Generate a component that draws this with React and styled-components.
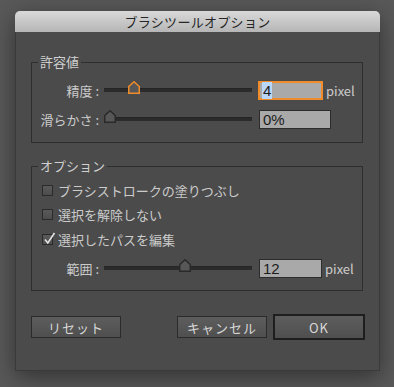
import styled, { createGlobalStyle } from 'styled-components';

const GlobalStyle = createGlobalStyle`
  html, body {
    margin: 0;
    padding: 0;
    background: #595959;
  }
  body {
    width: 394px;
    height: 387px;
    overflow: hidden;
    font-family: "Noto Sans CJK JP", "Noto Sans", sans-serif;
  }
`;

const Screen = styled.div`
  padding: 11px 0 0 15px;
`;

const Dialog = styled.div`
  width: 365px;
  height: 360px;
  display: flex;
  flex-direction: column;
  border-radius: 5px 5px 0 0;
  box-shadow: 0 6px 24px rgba(0, 0, 0, 0.45);
`;

const TitleBar = styled.div`
  height: 21px;
  flex: none;
  border-radius: 5px 5px 0 0;
  background: linear-gradient(#d9d9d9, #b6b6b6);
  color: #262626;
  font-size: 13px;
  line-height: 21px;
  text-align: center;
  letter-spacing: 0.3px;
`;

const Body = styled.div`
  flex: 1;
  background: #4b4b4b;
  border: 1px solid #3a3a3a;
  border-top: none;
  padding: 22px 16px 0 15px;
  display: flex;
  flex-direction: column;
`;

const Group = styled.fieldset`
  margin: ${p => (p.$first ? '0' : '15px 0 0')};
  padding: 0;
  min-width: 0;
  border: 1px solid #2e2e2e;
`;

const Legend = styled.legend`
  margin-left: 6px;
  padding: 0 2px;
  font-size: 13px;
  line-height: 16px;
  color: #d0d0d0;
`;

const GroupInner = styled.div`
  display: flex;
  flex-direction: column;
  padding: ${p => p.$pad};
`;

const Row = styled.div`
  height: 20px;
  display: flex;
  align-items: center;
  margin-top: ${p => p.$gap || 0}px;
`;

const Label = styled.span`
  width: 67px;
  margin-right: 5px;
  text-align: right;
  font-size: 13px;
  color: #cbcbcb;
  white-space: nowrap;
`;

const Track = styled.div`
  position: relative;
  width: 148px;
  height: 4px;
  margin-right: 6px;
  background: #2b2b2b;
  box-shadow: inset 0 1px 0 #242424;
`;

const Thumb = styled.svg`
  position: absolute;
  bottom: -2px;
  width: 12px;
  height: 13px;
`;

const Field = styled.div`
  box-sizing: border-box;
  width: ${p => p.$w}px;
  height: 19px;
  margin-left: ${p => p.$shift || 0}px;
  padding-left: ${p => (p.$focus ? 2 : 3)}px;
  border: ${p => (p.$focus ? '2px solid #f08c2a' : '1px solid #2c2c2c')};
  background: #a9a9a9;
  color: #1c1c1c;
  font-family: "Liberation Sans", "Noto Sans", sans-serif;
  font-size: 15px;
  line-height: ${p => (p.$focus ? 15 : 17)}px;
`;

const Selected = styled.span`
  background: #b9d6fb;
  padding: 0 1px;
`;

const Unit = styled.span`
  margin-left: 3px;
  font-size: 13px;
  color: #cbcbcb;
`;

const CheckRow = styled.div`
  height: 20px;
  display: flex;
  align-items: center;
  padding-left: 10px;
  margin-top: ${p => p.$gap || 0}px;
  font-size: 13px;
  color: #cbcbcb;
`;

const Box = styled.span`
  position: relative;
  box-sizing: border-box;
  width: 11px;
  height: 11px;
  margin-right: 5px;
  border: 1px solid #2a2a2a;
  background: linear-gradient(#5a5a5a, #4d4d4d);
`;

const Tick = styled.svg`
  position: absolute;
  left: 0;
  top: -3px;
  width: 13px;
  height: 13px;
`;

const Buttons = styled.div`
  display: flex;
  align-items: center;
  margin: 23px -2px 0 0;
  height: 26px;
`;

const Button = styled.div`
  box-sizing: border-box;
  width: ${p => (p.$primary ? 92 : 90)}px;
  height: ${p => (p.$primary ? 26 : 22)}px;
  margin-left: ${p => p.$ml || 0}px;
  border: ${p => (p.$primary ? '2px solid #1e1e1e' : '1px solid #2b2b2b')};
  background: linear-gradient(#5d5d5d, #4f4f4f);
  color: #d8d8d8;
  font-size: 13px;
  display: flex;
  align-items: center;
  justify-content: center;
  letter-spacing: 1px;
`;

const Slider = ({ value, focus }) => (
  <Track>
    <Thumb viewBox="0 0 12 13" style={{ left: `${value * 136}px` }}>
      <polygon
        points="0.75,5.5 6,0.75 11.25,5.5 11.25,12.25 0.75,12.25"
        fill="#575757"
        stroke={focus ? '#f08c2a' : '#2a2a2a'}
        strokeWidth="1.5"
      />
    </Thumb>
  </Track>
);

const Check = ({ checked, children, gap }) => (
  <CheckRow $gap={gap}>
    <Box>
      {checked && (
        <Tick viewBox="0 0 13 13">
          <path d="M2 7.5 L4.8 11 L11.5 1" fill="none" stroke="#e4e4e4" strokeWidth="1.6" />
        </Tick>
      )}
    </Box>
    {children}
  </CheckRow>
);

export default function App() {
  return (
    <>
      <GlobalStyle />
      <Screen>
        <Dialog>
          <TitleBar>ブラシツールオプション</TitleBar>
          <Body>
            <Group $first>
              <Legend>許容値</Legend>
              <GroupInner $pad="10px 0 13px">
                <Row>
                  <Label>精度 :</Label>
                  <Slider value={0.175} focus />
                  <Field $w={65} $focus>
                    <Selected>4</Selected>
                  </Field>
                  <Unit>pixel</Unit>
                </Row>
                <Row $gap={9}>
                  <Label>滑らかさ :</Label>
                  <Slider value={0} />
                  <Field $w={72} $shift={1}>0%</Field>
                </Row>
              </GroupInner>
            </Group>
            <Group>
              <Legend>オプション</Legend>
              <GroupInner $pad="6px 0 12px">
                <Check>ブラシストロークの塗りつぶし</Check>
                <Check gap={4}>選択を解除しない</Check>
                <Check gap={5} checked>選択したパスを編集</Check>
                <Row $gap={9}>
                  <Label>範囲 :</Label>
                  <Slider value={0.555} />
                  <Field $w={63} $shift={1}>12</Field>
                  <Unit>pixel</Unit>
                </Row>
              </GroupInner>
            </Group>
            <Buttons>
              <Button>リセット</Button>
              <Button $ml={56}>キャンセル</Button>
              <Button $ml={6} $primary>OK</Button>
            </Buttons>
          </Body>
        </Dialog>
      </Screen>
    </>
  );
}
